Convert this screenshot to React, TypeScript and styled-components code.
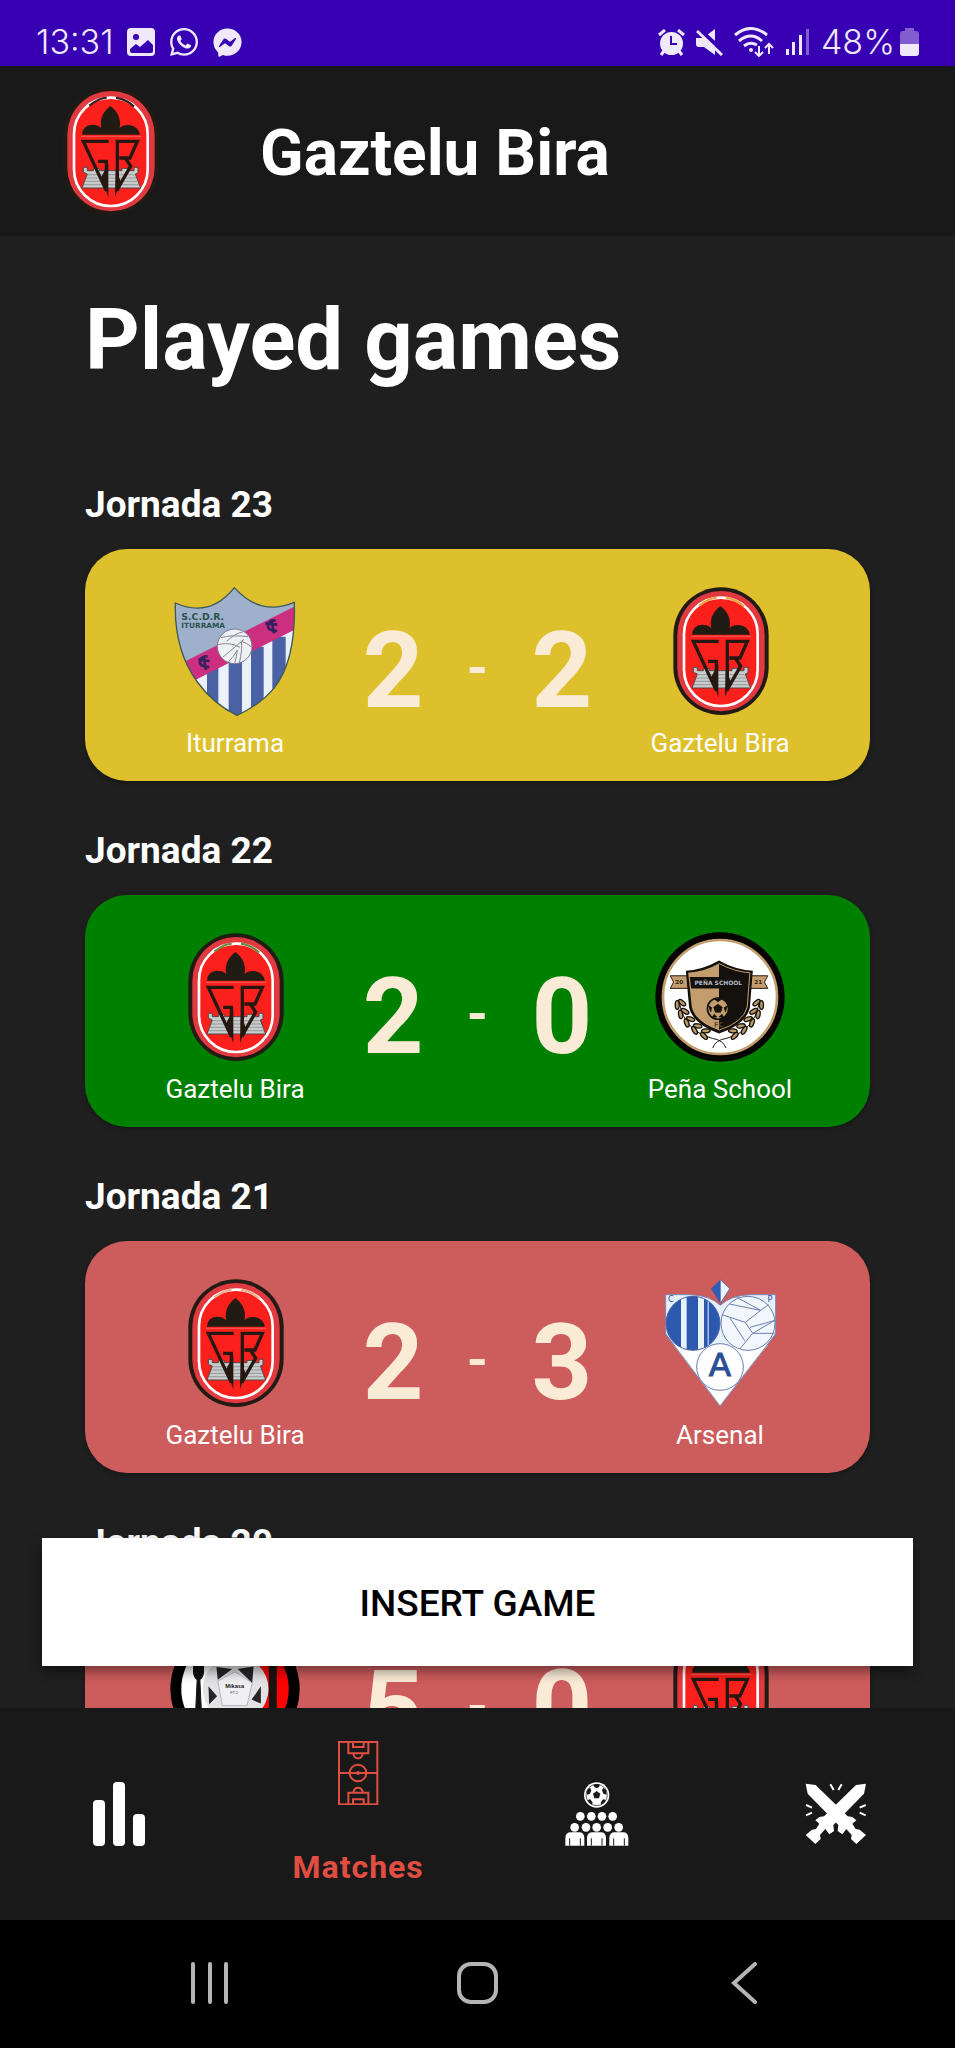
import React from "react";
import styled, { createGlobalStyle } from "styled-components";
import { FaFacebookMessenger, FaWhatsapp } from "react-icons/fa";

const GlobalStyle = createGlobalStyle`
  * { box-sizing: border-box; }
  body { margin: 0; background: #000; font-family: Roboto, "Liberation Sans", sans-serif; }
  h1, h2, p { margin: 0; }
`;

const Screen = styled.div`
  display: flex;
  flex-direction: column;
  height: 100vh;
  background: #1f1f1f;
  color: #fff;
`;

const StatusBar = styled.div`
  flex: none;
  display: flex;
  justify-content: space-between;
  align-items: flex-end;
  height: 66px;
  padding: 0 36px 4px;
  background: #3700b3;
  color: #f0e8fd;
`;

const StatusGroup = styled.div<{ $gap: number }>`
  display: flex;
  align-items: center;
  gap: ${(p) => p.$gap}px;
  height: 40px;
`;

const StatusText = styled.span`
  font-family: Inter, Roboto, sans-serif;
  font-size: 34px;
  line-height: 40px;
  font-weight: 300;
`;

const Header = styled.header`
  flex: none;
  display: flex;
  align-items: center;
  gap: 85px;
  height: 170px;
  padding: 0 45px;
  background: #191919;
`;

const AppTitle = styled.p`
  padding-top: 6px;
  font-size: 64px;
  line-height: 76px;
  font-weight: 700;
`;

const Body = styled.main`
  position: relative;
  flex: 1;
  min-height: 0;
`;

const Scroller = styled.div`
  height: 100%;
  overflow: hidden;
  padding: 54px 85px 0;
`;

const PageTitle = styled.h1`
  font-size: 85px;
  line-height: 100px;
  font-weight: 700;
  margin-bottom: 93px;
`;

const Round = styled.section`
  margin-bottom: 48px;
`;

const RoundTitle = styled.h2`
  font-size: 37px;
  line-height: 44px;
  font-weight: 700;
  margin-bottom: 22px;
`;

const Card = styled.article<{ $color: string }>`
  display: grid;
  grid-template-columns: 11fr 4fr 4fr 4fr 11fr;
  align-items: center;
  padding: 37px 34px 22px;
  border-radius: 42px;
  background: ${(p) => p.$color};
  box-shadow: 0 2px 5px rgba(0, 0, 0, 0.3);
`;

const Team = styled.div`
  display: flex;
  flex-direction: column;
  align-items: center;
  gap: 11px;
`;

const TeamName = styled.span`
  font-size: 26px;
  line-height: 32px;
`;

const Goals = styled.span`
  padding-bottom: 4px;
  font-size: 106px;
  line-height: 124px;
  font-weight: 700;
  text-align: center;
  color: #faebd7;
`;

const Dash = styled(Goals)`
  padding-bottom: 10px;
  font-size: 54px;
`;

const InsertButton = styled.button`
  position: absolute;
  left: 42px;
  right: 42px;
  bottom: 42px;
  height: 128px;
  padding: 4px 0 0;
  border: 0;
  background: #fff;
  color: #000;
  font: 500 37px/44px Roboto, "Liberation Sans", sans-serif;
  box-shadow: 0 5px 12px rgba(0, 0, 0, 0.45);
`;

const TabBar = styled.nav`
  flex: none;
  display: grid;
  grid-template-columns: repeat(4, 1fr);
  height: 212px;
  background: #191919;
`;

const Tab = styled.a<{ $active?: boolean }>`
  display: flex;
  flex-direction: column;
  align-items: center;
  justify-content: center;
  gap: 42px;
  color: ${(p) => (p.$active ? "#e04e42" : "#fff")};
  font-size: 32px;
  line-height: 40px;
  font-weight: 700;
  letter-spacing: 1px;
  text-decoration: none;
`;

const SystemBar = styled.div`
  flex: none;
  display: grid;
  grid-template-columns: repeat(3, 1fr);
  height: 128px;
  padding: 0 8%;
  background: #000;
`;

const SystemButton = styled.button`
  display: flex;
  align-items: center;
  justify-content: center;
  padding: 0 0 3px;
  border: 0;
  background: none;
  color: #b4b4b4;
`;

const GazteluCrest = ({ top = "#f4b08c" }: { top?: string }) => (
  <svg width="130" height="130" viewBox="77 46 390 390" aria-hidden="true">
    <rect x="132" y="50" width="286" height="383" rx="143" fill="#211b14" />
    <rect x="144" y="61" width="262" height="361" rx="131" fill="#e23940" />
    <rect x="164" y="81" width="221" height="325" rx="110" fill="#fb201c" stroke="#fff" strokeWidth="8" />
    <path d="M210 105Q240 82 262 81M290 81Q322 86 344 108" fill="none" stroke={top} strokeWidth="7" />
    <path d="M188 192Q190 163 218 162Q236 162 246 172Q242 160 247 140Q253 122 273 106Q294 122 299 140Q305 160 300 172Q312 161 330 163Q356 166 362 192Z" fill="#201c13" />
    <path d="M185 197H366" stroke="#f0524c" strokeWidth="4" />
    <path d="M192 290h12v10h18v-7h18v7h68v-7h18v7h18v-10h12v17l-8 3 16 42H188l16-42-12-5z" fill="#c9cccd" stroke="#4b4848" strokeWidth="3" />
    <path d="M203 312h143M200 322h150M196 332h158M192 342h167" stroke="#7c8083" strokeWidth="2" />
    <path d="M268 212H192L261 360V272H236" fill="none" stroke="#241810" strokeWidth="10" />
    <path d="M294 360V212H354L332 262H300M318 262L334 286L292 360" fill="none" stroke="#241810" strokeWidth="10" />
    <path d="M246 318L267 280V380ZM289 300L304 330L287 380Z" fill="#241810" />
  </svg>
);

const IturramaCrest = () => (
  <svg width="130" height="130" viewBox="30 48 390 390" aria-hidden="true">
    <defs>
      <clipPath id="iturrama-shield">
        <path d="M46 99Q150 145 223 53Q300 140 403 97Q408 270 344 352Q300 405 231 436Q160 402 112 336Q42 240 46 99Z" />
      </clipPath>
    </defs>
    <g clipPath="url(#iturrama-shield)">
      <rect x="30" y="48" width="390" height="390" fill="#9fb0cd" />
      <path d="M30 350L420 160V440H30Z" fill="#eaf1fb" />
      <path d="M141 290h34v140h-34zM206 260h40v180h-40zM273 230h38v200h-38zM337 200h40v200h-40z" fill="#4a62a4" />
      <path d="M70 277L410 106V176L100 333Z" fill="#cc2f80" />
    </g>
    <path d="M46 99Q150 145 223 53Q300 140 403 97Q408 270 344 352Q300 405 231 436Q160 402 112 336Q42 240 46 99Z" fill="none" stroke="#3c5a58" strokeWidth="4" />
    <g fill="none" stroke="#33205f" strokeWidth="8">
      <path d="M143 259q-22 0-23 16t28 16M115 269l34 4M130 258l8 42" />
      <path d="M347 151q-22 0-23 16t28 16M316 160l36 4M334 148l8 42" />
    </g>
    <circle cx="224" cy="229" r="52" fill="#eef0f4" stroke="#7c7990" strokeWidth="3" />
    <path d="M182 203Q215 194 264 200M200 214Q225 190 248 186M173 224Q210 215 240 232M188 262Q220 235 252 208M238 278Q248 240 244 212M224 280Q230 260 232 240M276 232Q260 218 244 214M205 276Q220 262 232 240" fill="none" stroke="#8b8896" strokeWidth="3" />
    <g fill="#28524d" fontFamily="DejaVu Sans, sans-serif" fontWeight="700">
      <text x="64" y="149" fontSize="28">S.C.D.R.</text>
      <text x="64" y="175" fontSize="22">ITURRAMA</text>
    </g>
  </svg>
);

const leaves = [
  [152, 256, 65], [162, 283, 55], [180, 307, 45], [203, 328, 35], [230, 343, 20],
];

const Laurel = () => (
  <g>
    <path d="M150 250Q165 335 250 357Q282 362 290 386" fill="none" stroke="#1c150c" strokeWidth="3" />
    {leaves.map(([x, y, a]) => (
      <g key={x} transform={`translate(${x} ${y}) rotate(${a})`} fill="#b99a69" stroke="#15100a" strokeWidth="4">
        <ellipse cx="0" cy="-9" rx="13" ry="6" transform="rotate(-25)" />
        <ellipse cx="0" cy="9" rx="13" ry="6" transform="rotate(25)" />
      </g>
    ))}
  </g>
);

const PenaCrest = () => (
  <svg width="130" height="130" viewBox="76 36 392 392" aria-hidden="true">
    <circle cx="272" cy="232" r="195" fill="#050403" />
    <circle cx="272" cy="232" r="172" fill="#fff" stroke="#c39d6d" strokeWidth="8" />
    <path d="M122 168H180V206H122L132 187ZM416 168H358V206H416L406 187Z" fill="#c39d6d" stroke="#2a1d10" strokeWidth="3" />
    <path d="M169 153Q220 150 269 122Q318 150 371 153L362 265Q350 315 269 342Q192 315 179 265Z" fill="#14100c" />
    <path d="M176 159Q224 156 269 131V332Q198 308 187 262Z" fill="#c39d6d" />
    <path d="M269 131Q316 156 362 159L354 262Q343 308 269 332" fill="none" stroke="#c39d6d" strokeWidth="3" />
    <path d="M181 172H269V206H185Z" fill="#14100c" />
    <g fontFamily="DejaVu Sans, sans-serif" fontWeight="700" textAnchor="middle">
      <text x="267" y="195" fontSize="18" fill="#b3bac8">PEÑA SCHOOL</text>
      <text x="149" y="194" fontSize="17" fill="#2a1d10">20</text>
      <text x="387" y="194" fontSize="17" fill="#2a1d10">21</text>
      <text x="268" y="321" fontSize="20" fill="#5e4525">FC</text>
    </g>
    <circle cx="266" cy="267" r="32" fill="#c39d6d" stroke="#14100c" strokeWidth="5" />
    <path d="M266 254l13 9-5 15h-16l-5-15zM254 238l12 8 12-8zM237 258l10 6-3 13zM295 258l-10 6 3 13zM249 294l5-10 9 8zM283 294l-5-10-9 8z" fill="#14100c" stroke="#14100c" strokeWidth="2" />
    <Laurel />
    <g transform="translate(540 0) scale(-1 1)"><Laurel /></g>
  </svg>
);

const ArsenalCrest = () => (
  <svg width="130" height="130" viewBox="75 40 390 390" aria-hidden="true">
    <defs>
      <clipPath id="arsenal-stripes"><circle cx="189" cy="176" r="81" /></clipPath>
    </defs>
    <path d="M107 90H180Q240 92 271 122Q302 92 360 90H437V208L270 424L107 208Z" fill="#e6f0fb" stroke="#7e86b4" strokeWidth="3" />
    <path d="M130 240L270 424L414 240L340 250L271 240Z" fill="#fff" />
    <path d="M107 208L270 424L437 208" fill="none" stroke="#7e86b4" strokeWidth="3" />
    <path d="M271 45L243 72L271 116Z" fill="#2f5db5" />
    <path d="M271 45L299 72L271 116Z" fill="#e9f5ff" stroke="#2f5db5" strokeWidth="2" />
    <circle cx="189" cy="176" r="81" fill="#e9f2ff" />
    <path clipPath="url(#arsenal-stripes)" d="M108 90h45v170h-45zM170 90h34v170h-34zM222 90h11v170h-11zM236 90h40v170h-40z" fill="#2c58ad" />
    <circle cx="189" cy="176" r="81" fill="none" stroke="#4a64a6" strokeWidth="3" />
    <circle cx="354" cy="176" r="81" fill="#f1f7fd" stroke="#6b7fae" strokeWidth="3" />
    <path d="M298 118L392 137M320 98L392 137L416 120M392 137L346 173L276 150M346 173L368 206L436 166M368 206H434M368 206L330 252M300 160L344 228M360 188L432 168" fill="none" stroke="#6b7fae" strokeWidth="3" />
    <circle cx="270" cy="307" r="70" fill="#fff" stroke="#6b7fae" strokeWidth="3" />
    <g fill="#2b4f97" fontFamily="DejaVu Sans, sans-serif" textAnchor="middle">
      <text x="270" y="334" fontSize="98" stroke="#2b4f97" strokeWidth="3">A</text>
      <text x="123" y="111" fontSize="25">C</text>
      <text x="420" y="111" fontSize="25">P</text>
    </g>
  </svg>
);

const ForkBallCrest = () => (
  <svg width="130" height="130" viewBox="390 372 392 392" aria-hidden="true">
    <defs>
      <clipPath id="fork-ball"><circle cx="586" cy="568" r="162" /></clipPath>
    </defs>
    <circle cx="586" cy="568" r="195" fill="#000" />
    <g clipPath="url(#fork-ball)">
      <rect x="390" y="372" width="196" height="392" fill="#fff" />
      <rect x="586" y="372" width="196" height="392" fill="#fb0303" />
      <path d="M688 372h24v392h-24z" fill="#191414" />
    </g>
    <path d="M461 490v30q2 16 11 20l-6 124h20l-6-124q9-4 11-20v-30M472 490v26M481 490v26" fill="#111" stroke="#111" strokeWidth="3" />
    <circle cx="588" cy="568" r="99" fill="#e3e3e6" />
    <path d="M530 502L578 508L534 540ZM594 508L642 500L638 550ZM506 560L532 590L508 614ZM664 560L636 600L664 612ZM550 628H626L588 650Z" fill="#252527" />
    <path d="M586 516L534 544L548 618H622L638 550Z" fill="#f0f0f2" stroke="#98989c" strokeWidth="2" />
    <text x="585" y="564" fontSize="17" fontWeight="700" textAnchor="middle" fontFamily="Liberation Sans, sans-serif" fill="#222">Mikasa</text>
    <text x="583" y="583" fontSize="11" textAnchor="middle" fontFamily="Liberation Sans, sans-serif" fill="#333">FT-5</text>
  </svg>
);

const GalleryIcon = () => (
  <svg width="28" height="28" viewBox="0 0 28 28" aria-hidden="true">
    <rect width="28" height="28" rx="4" fill="currentColor" />
    <circle cx="9" cy="9" r="3" fill="#3700b3" />
    <path d="M3 21l6-5 4 3 8-7 5 5v6q0 2-2 2H5q-2 0-2-2z" fill="#3700b3" />
  </svg>
);

const AlarmIcon = () => (
  <svg width="27" height="27" viewBox="0 0 27 27" aria-hidden="true">
    <circle cx="13.500" cy="14.500" r="11.500" fill="currentColor" />
    <path d="M1 6l6-5M26 6l-6-5M6 22l-3 4M21 22l3 4" stroke="currentColor" strokeWidth="3" />
    <path d="M13 7v8h6" fill="none" stroke="#3700b3" strokeWidth="2" />
  </svg>
);

const MuteIcon = () => (
  <svg width="27" height="27" viewBox="0 0 27 27" aria-hidden="true">
    <path d="M0 9h7L19 0v26L8 18H3Q0 18 0 15z" fill="currentColor" />
    <path d="M3 0L27 22" stroke="#3700b3" strokeWidth="4" />
    <path d="M1 2L26 26" stroke="currentColor" strokeWidth="3" />
  </svg>
);

const WifiIcon = () => (
  <svg width="40" height="30" viewBox="0 0 40 30" aria-hidden="true">
    <path d="M1 8Q17-5 33 8M5 14Q17 4 28 14M10 19Q16 14 23 18" fill="none" stroke="currentColor" strokeWidth="3" />
    <circle cx="17" cy="23" r="2" fill="currentColor" />
    <path d="M25 19v9M21 25l4 4 4-4M35 27v-9M31 21l4-4 4 4" fill="none" stroke="currentColor" strokeWidth="2" />
  </svg>
);

const SignalIcon = () => (
  <svg width="25" height="26" viewBox="0 0 25 26" fill="currentColor" aria-hidden="true">
    <path d="M1 20h3v6H1zM7 13h3v13H7zM14 6h3v20h-3z" />
    <path d="M21 0h3v26h-3z" opacity="0.400" />
  </svg>
);

const BatteryIcon = () => (
  <svg width="19" height="28" viewBox="0 0 19 28" fill="currentColor" aria-hidden="true">
    <path d="M5 0h9v3h2q3 0 3 3v10H0V6q0-3 3-3h2z" opacity="0.400" />
    <path d="M0 16h19v9q0 3-3 3H3q-3 0-3-3z" />
  </svg>
);

const StatsIcon = () => (
  <svg width="64" height="64" viewBox="0 0 64 64" fill="currentColor" aria-hidden="true">
    <rect x="6" y="18" width="12" height="46" rx="4" />
    <rect x="26" y="0" width="12" height="64" rx="4" />
    <rect x="46" y="32" width="12" height="32" rx="4" />
  </svg>
);

const PitchIcon = () => (
  <svg width="64" height="64" viewBox="798 90 192 192" fill="none" stroke="currentColor" strokeWidth="6" aria-hidden="true">
    <rect x="837" y="93" width="115" height="187" />
    <path d="M837 186H952M865 93V127H925V93M879 93V108H911V93M865 280V245H925V280M879 280V265H911V280M880 128Q883 142 894 142T909 128M880 244Q883 230 894 230T909 244" />
    <circle cx="894" cy="186" r="25" />
    <circle cx="894" cy="186" r="3" />
  </svg>
);

const SquadIcon = () => (
  <svg width="64" height="64" viewBox="105 128 192 192" fill="currentColor" aria-hidden="true">
    <circle cx="200" cy="167" r="38" />
    <path
      d="M200 155l11 8-4 14h-14l-4-14zM190 136q10-4 20 0l-3 7-7 4-7-4zM171 153l9-8 4 8-4 10-9 3zM229 153l-9-8-4 8 4 10 9 3zM172 182l9-2 7 10-2 6q-10-4-14-14zM228 182l-9-2-7 10 2 6q10-4 14-14z"
      fill="#191919"
    />
    <circle cx="200" cy="167" r="32" fill="none" stroke="#191919" strokeWidth="2" />
    {[151, 184, 216, 248].map((x) => <circle key={x} cx={x} cy="231" r="13" />)}
    {[134, 168, 200, 233, 266].map((x) => <circle key={x} cx={x} cy="264" r="13" />)}
    {[106, 171, 238].map((x) => (
      <g key={x}>
        <path d={`M${x} 319V296q0-17 17-17h24q16 0 16 17v23z`} />
        <path d={`M${x + 13} 297v22M${x + 45} 297v22`} stroke="#191919" strokeWidth="3" />
      </g>
    ))}
  </svg>
);

const Sword = () => (
  <path d="M826 134L856 138L952 232L966 234L978 244L966 254L976 270L988 272L1007 288L978 315L962 300L964 288L948 270L936 286L922 276L924 258L832 164Z" />
);

const SwordsIcon = () => (
  <svg width="64" height="64" viewBox="821 129 192 192" fill="currentColor" aria-hidden="true">
    <Sword />
    <g transform="translate(1833 0) scale(-1 1)"><Sword /></g>
    <path d="M900 136l10 17M934 136l-10 17M827 198l18 8M827 229l18-8M1006 198l-18 8M1006 229l-18-8" stroke="currentColor" strokeWidth="6" />
  </svg>
);

const RecentsIcon = () => (
  <svg width="42" height="42" viewBox="0 0 42 42" aria-hidden="true">
    <path d="M4 2v38M21 2v38M37 2v38" stroke="currentColor" strokeWidth="4" strokeLinecap="round" />
  </svg>
);

const HomeIcon = () => (
  <svg width="42" height="42" viewBox="0 0 42 42" aria-hidden="true">
    <rect x="2" y="2" width="37" height="38" rx="12" fill="none" stroke="currentColor" strokeWidth="4" />
  </svg>
);

const BackIcon = () => (
  <svg width="42" height="42" viewBox="0 0 42 42" aria-hidden="true">
    <path d="M31 2L10 21L31 40" fill="none" stroke="currentColor" strokeWidth="4" strokeLinecap="round" />
  </svg>
);

type Side = { name: string; goals: number; crest: React.ReactNode };

const gaztelu = (goals: number, top?: string): Side => ({
  name: "Gaztelu Bira",
  goals,
  crest: <GazteluCrest top={top} />,
});

const games: { round: number; color: string; home: Side; away: Side }[] = [
  { round: 23, color: "#dec02c", home: { name: "Iturrama", goals: 2, crest: <IturramaCrest /> }, away: gaztelu(2, "#f5a13c") },
  { round: 22, color: "#008000", home: gaztelu(2, "#6a8a3c"), away: { name: "Peña School", goals: 0, crest: <PenaCrest /> } },
  { round: 21, color: "#cd5c5c", home: gaztelu(2), away: { name: "Arsenal", goals: 3, crest: <ArsenalCrest /> } },
  { round: 20, color: "#cd5c5c", home: { name: "Mutilvera", goals: 5, crest: <ForkBallCrest /> }, away: gaztelu(0) },
];

const TeamSide = ({ side }: { side: Side }) => (
  <Team>
    {side.crest}
    <TeamName>{side.name}</TeamName>
  </Team>
);

export default function App() {
  return (
    <Screen>
      <GlobalStyle />
      <StatusBar>
        <StatusGroup $gap={13}>
          <StatusText>13:31</StatusText>
          <GalleryIcon />
          <FaWhatsapp size={32} />
          <FaFacebookMessenger size={29} />
        </StatusGroup>
        <StatusGroup $gap={11}>
          <AlarmIcon />
          <MuteIcon />
          <WifiIcon />
          <SignalIcon />
          <StatusGroup $gap={5}>
            <StatusText>48%</StatusText>
            <BatteryIcon />
          </StatusGroup>
        </StatusGroup>
      </StatusBar>
      <Header>
        <GazteluCrest top="#3a1c1c" />
        <AppTitle>Gaztelu Bira</AppTitle>
      </Header>
      <Body>
        <Scroller>
          <PageTitle>Played games</PageTitle>
          {games.map((game) => (
            <Round key={game.round}>
              <RoundTitle>Jornada {game.round}</RoundTitle>
              <Card $color={game.color}>
                <TeamSide side={game.home} />
                <Goals>{game.home.goals}</Goals>
                <Dash>-</Dash>
                <Goals>{game.away.goals}</Goals>
                <TeamSide side={game.away} />
              </Card>
            </Round>
          ))}
        </Scroller>
        <InsertButton type="button">INSERT GAME</InsertButton>
      </Body>
      <TabBar>
        <Tab href="#stats" aria-label="Stats"><StatsIcon /></Tab>
        <Tab href="#matches" $active><PitchIcon />Matches</Tab>
        <Tab href="#squad" aria-label="Squad"><SquadIcon /></Tab>
        <Tab href="#versus" aria-label="Versus"><SwordsIcon /></Tab>
      </TabBar>
      <SystemBar>
        <SystemButton type="button" aria-label="Recent apps"><RecentsIcon /></SystemButton>
        <SystemButton type="button" aria-label="Home"><HomeIcon /></SystemButton>
        <SystemButton type="button" aria-label="Back"><BackIcon /></SystemButton>
      </SystemBar>
    </Screen>
  );
}
